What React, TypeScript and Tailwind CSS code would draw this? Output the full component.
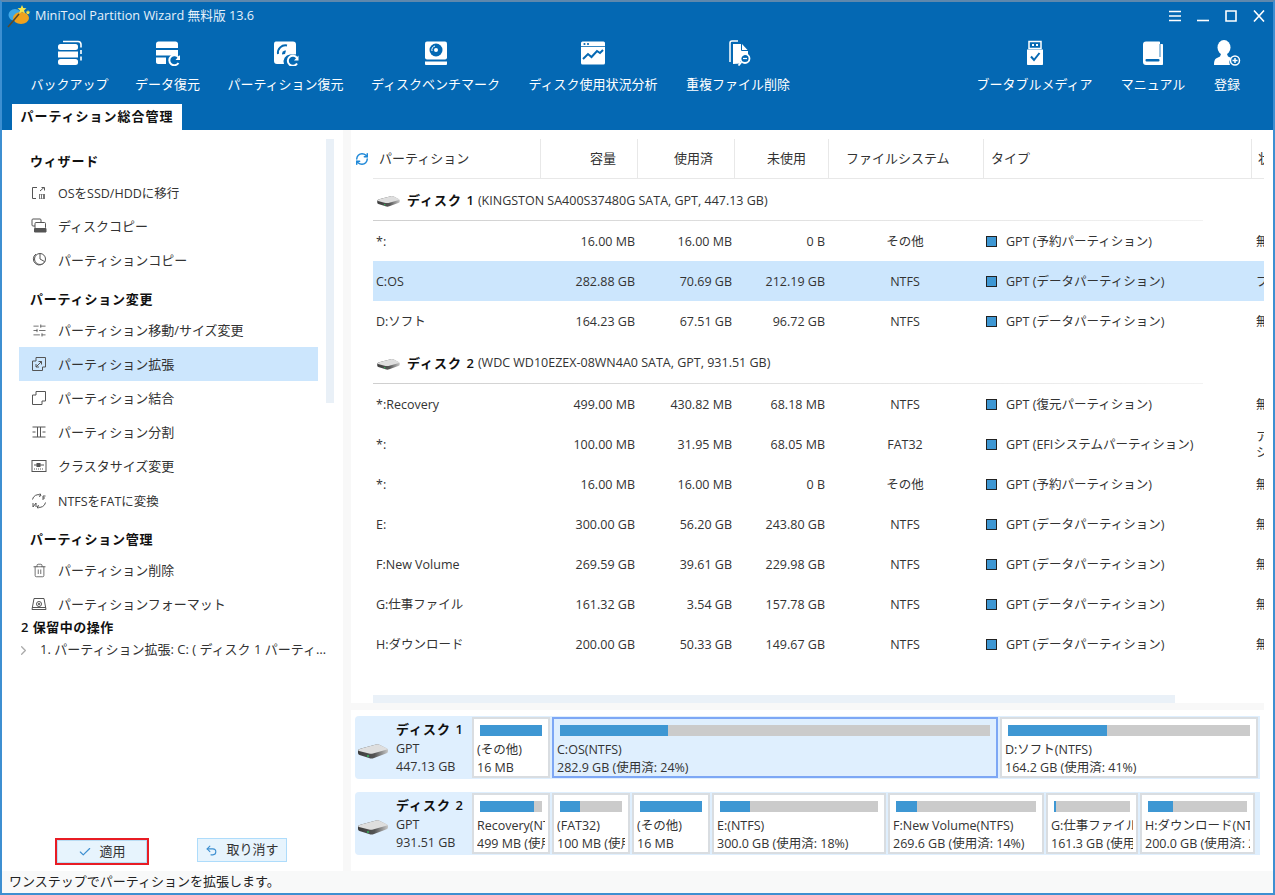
import { ChevronRight, Check, Undo2, RefreshCw, SlidersHorizontal, Trash2 } from 'lucide-react';
import type { ReactNode } from 'react';

const BLUE = '#0468b3';

function Logo() {
  return (
    <svg width="24" height="24" viewBox="0 0 24 24">
      <ellipse cx="8" cy="11" rx="6.500" ry="6" fill="#3fa7e6" />
      <ellipse cx="14" cy="14" rx="8" ry="6" fill="#f0a21e" />
      <path d="M1 23 L12 10" stroke="#5a4a2a" strokeWidth="1.600" />
      <path d="M15 1l1.300 3 3.200.3-2.400 2 .8 3.200-2.900-1.700-2.800 1.700.7-3.200-2.400-2 3.200-.3z" fill="#f7e64a" />
      <path d="M21 6l.7 1.600 1.700.2-1.300 1.100.4 1.700-1.500-.9-1.500.9.4-1.700-1.300-1.100 1.700-.2z" fill="#f7e64a" />
    </svg>
  );
}

function BackupIcon() {
  return (
    <svg width="26" height="26" viewBox="0 0 26 26" fill="#fff">
      <rect x="1" y="4" width="20" height="6" rx="2.500" />
      <rect x="1" y="11.500" width="20" height="6" />
      <rect x="1" y="19" width="20" height="6" rx="2.500" />
      <path d="M6 1.500h15c2 0 3 1 3 3v3" fill="none" stroke="#fff" strokeWidth="1.600" />
      <path d="M24 10v4M24 16.500v4" fill="none" stroke="#fff" strokeWidth="1.600" />
    </svg>
  );
}

function DataRecoveryIcon() {
  return (
    <svg width="26" height="26" viewBox="0 0 26 26" fill="#fff">
      <path d="M1 4c0-1.500 1-2.500 2.500-2.500h17C22 1.500 23 2.500 23 4v4H1z" />
      <rect x="1" y="10" width="22" height="5.500" />
      <path d="M1 17.500h10v6.500H3c-1.200 0-2-.8-2-2z" />
      <path d="M23.500 17.500a5 5 0 1 0 0 5.500" fill="none" stroke="#fff" strokeWidth="2" />
      <path d="M25 15v5h-4.500z" />
    </svg>
  );
}

function PartitionRecoveryIcon() {
  return (
    <svg width="26" height="26" viewBox="0 0 26 26">
      <path d="M4 1.500h16c2 0 3 1 3 3v10h-6a7 7 0 0 0-6 9.500H4c-2 0-3-1-3-3v-17c0-2 1-2.500 3-2.500z" fill="#fff" />
      <path d="M5 14a7.500 7.500 0 0 1 9-8.500" fill="none" stroke={BLUE} strokeWidth="2" />
      <path d="M9 14.500a3.500 3.500 0 0 1 4-4l-1 3.500z" fill={BLUE} />
      <path d="M24 18a5 5 0 1 0 0 5.500" fill="none" stroke="#fff" strokeWidth="2" />
      <path d="M25.500 15.500v5H21z" fill="#fff" />
    </svg>
  );
}

function BenchmarkIcon() {
  return (
    <svg width="24" height="26" viewBox="0 0 24 26">
      <rect x="1" y="1.500" width="22" height="18" rx="2" fill="#fff" />
      <circle cx="12" cy="10" r="6.500" fill={BLUE} />
      <circle cx="12" cy="10" r="2" fill="#fff" />
      <path d="M8 11a4 4 0 0 1 3-5" stroke="#fff" strokeWidth="1" fill="none" />
      <path d="M1 21.500h22v2.500c0 .5-.5 1-1 1H2c-.5 0-1-.5-1-1z" fill="#fff" />
    </svg>
  );
}

function UsageIcon() {
  return (
    <svg width="26" height="26" viewBox="0 0 26 26">
      <rect x="1" y="1.500" width="24" height="23" rx="1.500" fill="#fff" />
      <circle cx="4.500" cy="4" r="1.100" fill={BLUE} />
      <circle cx="8" cy="4" r="1.100" fill={BLUE} />
      <path d="M1 6.500h24" stroke={BLUE} strokeWidth="0.8" />
      <path d="M3 19l5-5 3.500 3 5.500-6 3 2 3-3" fill="none" stroke={BLUE} strokeWidth="2" />
    </svg>
  );
}

function DuplicateIcon() {
  return (
    <svg width="26" height="26" viewBox="0 0 26 26">
      <path d="M5 22V3c0-1 1-2 2-2h6" fill="none" stroke="#fff" strokeWidth="1.500" />
      <path d="M8 4h9l6 6.500V15a6 6 0 0 0-7 8.500l-8 .5z" fill="#fff" />
      <path d="M16.500 4v6.500H23" fill="none" stroke={BLUE} strokeWidth="1" />
      <circle cx="20" cy="18.500" r="4.500" fill="none" stroke="#fff" strokeWidth="1.800" />
      <path d="M18 18.500h4" stroke="#fff" strokeWidth="1.200" />
      <path d="M16.500 22l-3 3.500" stroke="#fff" strokeWidth="1.800" />
    </svg>
  );
}

function UsbIcon() {
  return (
    <svg width="20" height="26" viewBox="0 0 20 26">
      <path d="M4 1.500h12v7H4z" fill="none" stroke="#fff" strokeWidth="1.500" />
      <rect x="7" y="4" width="2" height="2" fill="#fff" />
      <rect x="11" y="4" width="2" height="2" fill="#fff" />
      <path d="M2 9.500h16V24c0 .6-.4 1-1 1H3c-.6 0-1-.4-1-1z" fill="#fff" />
      <path d="M6 16.500l3 3.500 5.500-7" fill="none" stroke={BLUE} strokeWidth="2" />
    </svg>
  );
}

function BookIcon() {
  return (
    <svg width="24" height="26" viewBox="0 0 24 26">
      <path d="M5 1.500h13c.6 0 1 .4 1 1v1.500h2c.6 0 1 .4 1 1V24c0 .6-.4 1-1 1H5c-2 0-3-1-3-3V4.500c0-2 1-3 3-3z" fill="#fff" />
      <path d="M19 4v13" stroke={BLUE} strokeWidth="0.8" />
      <rect x="4.500" y="19" width="14" height="2.500" rx="1" fill={BLUE} />
    </svg>
  );
}

function UserIcon() {
  return (
    <svg width="28" height="26" viewBox="0 0 28 26">
      <ellipse cx="11" cy="7.500" rx="6.500" ry="7.500" fill="#fff" />
      <path d="M8 14h6l1 2.500 3.500 1.500a6 6 0 0 0-1.500 7H1c0-3 .5-5.500 2-6.500l4-2z" fill="#fff" />
      <circle cx="22" cy="20.500" r="4.500" fill="none" stroke="#fff" strokeWidth="1.500" />
      <path d="M22 18v5M19.500 20.500h5" stroke="#fff" strokeWidth="1.500" />
    </svg>
  );
}

function DiskGlyph({ w = 32, h = 16 }: { w?: number; h?: number }) {
  return (
    <svg width={w} height={h} viewBox="0 0 32 16">
      <defs>
        <linearGradient id="hddSide" x1="0" x2="1" y1="0" y2="0">
          <stop offset="0" stopColor="#3c3c3c" />
          <stop offset="0.55" stopColor="#555" />
          <stop offset="1" stopColor="#c8c8c8" />
        </linearGradient>
      </defs>
      <path d="M1 7Q2 6 6 5L19 1.500Q21 1 23 2L30 5.500Q31.500 6.500 31 8.500Q31 10 29 10.500L17 15Q14.500 16 12 15L2.500 12Q1 11.500 1 10z" fill="url(#hddSide)" />
      <path d="M1 7Q2 6 6 5L19 1.500Q21 1 23 2L30 5.500Q31 6 30 6.500L16 10.500Q14 11 12 10.500L2 8Q1 7.500 1 7z" fill="#dedede" />
      <circle cx="11" cy="13" r="0.900" fill="#2fc45a" />
    </svg>
  );
}

function LineIcon({ children }: { children: ReactNode }) {
  return (
    <svg width="16" height="16" viewBox="0 0 16 16" fill="none" stroke="#555" strokeWidth="1">
      {children}
    </svg>
  );
}

const sideIcons: Record<string, ReactNode> = {
  migrate: (
    <LineIcon>
      <path d="M6 2.500H1.500v11H5" />
      <path d="M9 6l4-3.500M10.500 2.500h3v3" />
      <rect x="8" y="9" width="6" height="5" fill="#777" stroke="none" />
      <path d="M9.500 9.500v4M11.500 9.500v4" stroke="#fff" />
    </LineIcon>
  ),
  disk: (
    <LineIcon>
      <rect x="1" y="1" width="9" height="7" rx="1" />
      <rect x="4" y="4.500" width="10.500" height="6" rx="1" fill="#fff" />
      <path d="M3.500 10.500h11.500v3.500H3.500z" fill="#555" stroke="#555" />
    </LineIcon>
  ),
  part: (
    <LineIcon>
      <path d="M5 2a6 6 0 1 0 9 7" />
      <circle cx="9" cy="7" r="5.500" fill="#fff" />
      <path d="M9 1.500V7l4.500 2.500" />
    </LineIcon>
  ),
  move: <SlidersHorizontal size={15} strokeWidth={1.200} color="#444" />,
  extend: (
    <LineIcon>
      <path d="M5 1.500h9.500V11h-3v3.500H1.500V5H5z" />
      <path d="M5 11l5.500-5.500M7.500 5.500h3v3M5 8v3h3" />
    </LineIcon>
  ),
  merge: (
    <LineIcon>
      <path d="M5 1.500h9.500V11H11v3.500H1.500V5H5z" />
    </LineIcon>
  ),
  split: (
    <LineIcon>
      <path d="M1.500 3h13M1.500 13h13M6.500 3v10M9.500 3v10M1.500 8h3M11.500 8h3" />
    </LineIcon>
  ),
  cluster: (
    <LineIcon>
      <rect x="1" y="2.500" width="14" height="11" />
      <path d="M3 7h10" />
      <rect x="6" y="5.500" width="3" height="3" fill="#555" />
      <path d="M3 11h10" strokeDasharray="1 1" />
    </LineIcon>
  ),
  convert: (
    <LineIcon>
      <path d="M1.500 6.500a6 6 0 0 1 8-4.500M14.500 9.500a6 6 0 0 1-8 4.500" />
      <path d="M9 0.500l1 2-2 1M7 15.500l-1-2 2-1" />
      <path d="M12 3h2.500M12 3v4M12 5h2M2 10v4l3-4v4" />
    </LineIcon>
  ),
  del: <Trash2 size={15} strokeWidth={1.200} color="#444" />,
  format: (
    <LineIcon>
      <path d="M3 2.500h10l2 11H1z" />
      <circle cx="8" cy="8" r="2.500" />
      <circle cx="8" cy="8" r="0.700" fill="#555" />
      <path d="M1 11.500h14" />
    </LineIcon>
  ),
};

type Side = { icon: string; label: string };
const sideGroups: { title: string; items: Side[] }[] = [
  {
    title: 'ウィザード',
    items: [
      { icon: 'migrate', label: 'OSをSSD/HDDに移行' },
      { icon: 'disk', label: 'ディスクコピー' },
      { icon: 'part', label: 'パーティションコピー' },
    ],
  },
  {
    title: 'パーティション変更',
    items: [
      { icon: 'move', label: 'パーティション移動/サイズ変更' },
      { icon: 'extend', label: 'パーティション拡張' },
      { icon: 'merge', label: 'パーティション結合' },
      { icon: 'split', label: 'パーティション分割' },
      { icon: 'cluster', label: 'クラスタサイズ変更' },
      { icon: 'convert', label: 'NTFSをFATに変換' },
    ],
  },
  {
    title: 'パーティション管理',
    items: [
      { icon: 'del', label: 'パーティション削除' },
      { icon: 'format', label: 'パーティションフォーマット' },
    ],
  },
];

type Row = { name: string; cap: string; used: string; free: string; fs: string; type: string; status: string; selected?: boolean };
const disk1Rows: Row[] = [
  { name: '*:', cap: '16.00 MB', used: '16.00 MB', free: '0 B', fs: 'その他', type: 'GPT (予約パーティション)', status: '無し' },
  { name: 'C:OS', cap: '282.88 GB', used: '70.69 GB', free: '212.19 GB', fs: 'NTFS', type: 'GPT (データパーティション)', status: 'ブート', selected: true },
  { name: 'D:ソフト', cap: '164.23 GB', used: '67.51 GB', free: '96.72 GB', fs: 'NTFS', type: 'GPT (データパーティション)', status: '無し' },
];
const disk2Rows: Row[] = [
  { name: '*:Recovery', cap: '499.00 MB', used: '430.82 MB', free: '68.18 MB', fs: 'NTFS', type: 'GPT (復元パーティション)', status: '無し' },
  { name: '*:', cap: '100.00 MB', used: '31.95 MB', free: '68.05 MB', fs: 'FAT32', type: 'GPT (EFIシステムパーティション)', status: 'アクティブ &\nシステム' },
  { name: '*:', cap: '16.00 MB', used: '16.00 MB', free: '0 B', fs: 'その他', type: 'GPT (予約パーティション)', status: '無し' },
  { name: 'E:', cap: '300.00 GB', used: '56.20 GB', free: '243.80 GB', fs: 'NTFS', type: 'GPT (データパーティション)', status: '無し' },
  { name: 'F:New Volume', cap: '269.59 GB', used: '39.61 GB', free: '229.98 GB', fs: 'NTFS', type: 'GPT (データパーティション)', status: '無し' },
  { name: 'G:仕事ファイル', cap: '161.32 GB', used: '3.54 GB', free: '157.78 GB', fs: 'NTFS', type: 'GPT (データパーティション)', status: '無し' },
  { name: 'H:ダウンロード', cap: '200.00 GB', used: '50.33 GB', free: '149.67 GB', fs: 'NTFS', type: 'GPT (データパーティション)', status: '無し' },
];

function TableRow({ r }: { r: Row }) {
  return (
    <div className={`grid grid-cols-[167px_97px_97px_93px_156px_268px_1fr] h-10 pt-[2px] items-center text-[#333] ${r.selected ? 'bg-[#cce6fd]' : ''}`}>
      <div className="pl-[3px]">{r.name}</div>
      <div className="text-right pr-[2px]">{r.cap}</div>
      <div className="text-right pr-[2px]">{r.used}</div>
      <div className="text-right pr-[2px]">{r.free}</div>
      <div className="text-center">{r.fs}</div>
      <div className="flex items-center">
        <span className="w-[11px] h-[11px] ml-[3px] mr-[9px] mb-[2px] bg-[#3e97d3] border border-[#222]" />
        {r.type}
      </div>
      <div className="pl-[5px] leading-[16px] whitespace-pre">{r.status}</div>
    </div>
  );
}

function DiskHeader({ label, info, h }: { label: string; info: string; h: string }) {
  return (
    <div className={`${h} flex flex-col`}>
      <div className="flex-1 flex items-center pt-[3px] pl-[3px] text-[#333]">
        <DiskGlyph w={25} h={12} />
        <span className="ml-[6px] mr-[3px] font-semibold text-[#111] text-[13px] tracking-[1px]">{label}</span>
        {info}
      </div>
      <div className="h-px w-[830px] bg-linear-to-r from-[#cfcfcf] to-[#f2f2f2]" />
    </div>
  );
}

type Cell = { w: string; pct: number; l1: string; l2: string; selected?: boolean };
const map1: Cell[] = [
  { w: 'w-[78px]', pct: 100, l1: '(その他)', l2: '16 MB' },
  { w: 'w-[446px]', pct: 25, l1: 'C:OS(NTFS)', l2: '282.9 GB (使用済: 24%)', selected: true },
  { w: 'w-[258px]', pct: 41, l1: 'D:ソフト(NTFS)', l2: '164.2 GB (使用済: 41%)' },
];
const map2: Cell[] = [
  { w: 'w-[78px]', pct: 87, l1: 'Recovery(NTFS)', l2: '499 MB (使用済: 86%)' },
  { w: 'w-[78px]', pct: 32, l1: '(FAT32)', l2: '100 MB (使用済: 32%)' },
  { w: 'w-[78px]', pct: 100, l1: '(その他)', l2: '16 MB' },
  { w: 'w-[174px]', pct: 19, l1: 'E:(NTFS)', l2: '300.0 GB (使用済: 18%)' },
  { w: 'w-[156px]', pct: 15, l1: 'F:New Volume(NTFS)', l2: '269.6 GB (使用済: 14%)' },
  { w: 'w-[92px]', pct: 3, l1: 'G:仕事ファイル(NTFS)', l2: '161.3 GB (使用済: 2%)' },
  { w: 'w-[115px]', pct: 25, l1: 'H:ダウンロード(NTFS)', l2: '200.0 GB (使用済: 25%)' },
];

function DiskCard({ name, size, cells }: { name: string; size: string; cells: Cell[] }) {
  return (
    <div className="w-[905px] h-[63px] ml-1 bg-[#dfeffe] rounded-l-[4px] flex py-px">
      <div className="w-[117px] flex shrink-0">
        <div className="w-[41px] pl-[2px] pt-[26px]">
          <DiskGlyph />
        </div>
        <div className="leading-[18px] text-[#333] pt-[3px]">
          <div className="font-semibold text-[#111] text-[13px] tracking-[1px] mb-[2px]">{name}</div>
          <div>GPT</div>
          <div>{size}</div>
        </div>
      </div>
      <div className="flex gap-[2px]">
        {cells.map((c) => (
          <div key={c.l1} className={`${c.w} border-2 px-[3px] ${c.selected ? 'border-[#7da7f5] bg-[#dfeffe]' : 'border-[#d9dde1] bg-white'}`}>
            <div className="overflow-hidden h-full whitespace-nowrap text-[#333] leading-[18px]">
              <div className="mx-[3px] mt-[6px] mb-[5px] h-[11px] bg-[#cbcbcb]">
                <div className="h-full bg-[#3e97d3]" style={{ width: `${c.pct}%` }} />
              </div>
              <div>{c.l1}</div>
              <div>{c.l2}</div>
            </div>
          </div>
        ))}
      </div>
    </div>
  );
}

function ToolItem({ w, icon, label }: { w: string; icon: ReactNode; label: string }) {
  return (
    <div className={`${w} flex flex-col items-center`}>
      <div className="h-[26px] flex items-center">{icon}</div>
      <div className="mt-[9px] h-[18px] leading-[18px] text-[13px] text-white whitespace-nowrap">{label}</div>
    </div>
  );
}

export default function App() {
  return (
    <div className="w-[1275px] h-[895px] flex flex-col overflow-hidden border-x-2 border-b-2 border-[#3d8fd1] border-t-2 border-t-[#5f88ad] bg-white text-[12.5px] font-['Open_Sans','Noto_Sans_CJK_JP',sans-serif]">
      <header className="h-[128px] shrink-0 bg-[#0468b3] flex flex-col">
        <div className="h-[28px] flex items-center pl-[5px] pr-[8px]">
          <Logo />
          <span className="ml-1 text-[12.7px] text-[#e6f1fa]">MiniTool Partition Wizard 無料版 13.6</span>
          <div className="ml-auto flex items-center gap-[16px] text-white">
            <svg width="12" height="12" viewBox="0 0 12 12" stroke="#fff" strokeWidth="1.600"><path d="M0 1.500h12M0 6h12M0 10.500h12" /></svg>
            <svg width="12" height="12" viewBox="0 0 12 12" stroke="#fff" strokeWidth="1.600"><path d="M0 10.500h12" /></svg>
            <svg width="12" height="12" viewBox="0 0 12 12" stroke="#fff" strokeWidth="1.600" fill="none"><path d="M1 1h10v10H1z" /></svg>
            <svg width="12" height="12" viewBox="0 0 12 12" stroke="#fff" strokeWidth="1.600"><path d="M1 .5l10 11M11 .5l-10 11" /></svg>
          </div>
        </div>
        <div className="mt-[10px] flex justify-between pl-[30px] pr-[33px]">
          <div className="flex gap-[28px]">
            <ToolItem w="w-[75px]" icon={<BackupIcon />} label="バックアップ" />
            <ToolItem w="w-[65px]" icon={<DataRecoveryIcon />} label="データ復元" />
            <ToolItem w="w-[115px]" icon={<PartitionRecoveryIcon />} label="パーティション復元" />
            <ToolItem w="w-[129px]" icon={<BenchmarkIcon />} label="ディスクベンチマーク" />
            <ToolItem w="w-[130px]" icon={<UsageIcon />} label="ディスク使用状況分析" />
            <ToolItem w="w-[104px]" icon={<DuplicateIcon />} label="重複ファイル削除" />
          </div>
          <div className="flex gap-[29px]">
            <ToolItem w="w-[115px]" icon={<UsbIcon />} label="ブータブルメディア" />
            <ToolItem w="w-[64px]" icon={<BookIcon />} label="マニュアル" />
            <ToolItem w="w-[26px]" icon={<UserIcon />} label="登録" />
          </div>
        </div>
        <div className="mt-[11px] ml-[10px] w-[170px] h-[26px] bg-white flex items-center justify-center text-[13px] font-semibold text-[#111] tracking-[1px]">
          パーティション総合管理
        </div>
      </header>

      <main className="flex-1 flex min-h-0">
        <aside className="relative w-[341px] shrink-0 flex flex-col">
          <div className="absolute left-[324px] top-[9px] w-2 h-[264px] bg-[#e9f0f7]" />
          <div className="h-[484px] overflow-hidden pt-[15px] pl-[17px]">
            {sideGroups.map((g, gi) => (
              <div key={g.title}>
                <div className={`${gi === 0 ? 'h-[30px] pt-[4px]' : 'h-9 pt-[10px]'} pl-[11px] flex items-center font-semibold text-[13px] text-[#111] tracking-[0.8px]`}>
                  {g.title}
                </div>
                {g.items.map((it) => (
                  <div key={it.label} className={`w-[299px] h-[34px] flex items-center pl-[12px] text-[#333] ${/[A-Z]/.test(it.label) ? 'text-[12.5px] pt-[2px]' : 'text-[13px]'} ${it.icon === 'extend' ? 'bg-[#cce6fd]' : ''}`}>
                    <span className="w-4 h-4 flex items-center justify-center">{sideIcons[it.icon]}</span>
                    <span className="ml-[11px] pt-[2px] whitespace-nowrap">{it.label}</span>
                  </div>
                ))}
              </div>
            ))}
          </div>
          <div className="mt-[2px] pl-[19px] h-6 flex items-center font-semibold text-[13px] text-[#111] tracking-[0.5px]">2 保留中の操作</div>
          <div className="flex items-center h-[20px] pl-[14px] text-[#333]">
            <ChevronRight size={15} color="#aaa" strokeWidth={2} />
            <span className="ml-[9px] w-[290px] truncate text-[13px]">1. パーティション拡張: C: ( ディスク 1 パーティション 2 )</span>
          </div>
          <div className="mt-auto pb-[6px] pl-[53px] flex items-start gap-[48px]">
            <button className="w-[94px] h-[27px] border-2 border-[#e81c24] p-0">
              <span className="h-full flex items-center justify-center gap-[7px] bg-[#e7f4fd] border border-[#b9dcf3] text-[#333] text-[13px]">
                <Check size={14} color="#3d8fd1" strokeWidth={2} />
                適用
              </span>
            </button>
            <button className="w-[90px] h-[24px] border border-[#aedcfb] bg-[#e7f4fd] flex items-center justify-center gap-[8px] text-[#333] text-[13px]">
              <Undo2 size={13} color="#3d8fd1" strokeWidth={2} />
              取り消す
            </button>
          </div>
        </aside>

        <div className="w-2 shrink-0 bg-[#f8f8f8]" />

        <section className="w-[913px] shrink-0 flex flex-col">
          <div className="h-[565px] flex pt-[9px]">
            <div className="w-[22px] shrink-0 pt-[13px] pl-[4px]">
              <RefreshCw size={14} color="#1e88d8" strokeWidth={2.500} />
            </div>
            <div className="w-[891px] overflow-hidden whitespace-nowrap">
              <div className="grid grid-cols-[168px_97px_97px_94px_155px_268px_1fr] h-10 border-b border-[#e8e8e8] text-[#333]">
                <div className="pl-[6px] flex items-center text-[13px] border-r border-[#e8e8e8]">パーティション</div>
                <div className="pr-[21px] flex items-center justify-end text-[13px] border-r border-[#e8e8e8]">容量</div>
                <div className="pr-[21px] flex items-center justify-end text-[13px] border-r border-[#e8e8e8]">使用済</div>
                <div className="pr-[22px] flex items-center justify-end text-[13px] border-r border-[#e8e8e8]">未使用</div>
                <div className="pl-[17px] flex items-center text-[13px] border-r border-[#e8e8e8]">ファイルシステム</div>
                <div className="pl-[7px] flex items-center text-[13px] border-r border-[#e8e8e8]">タイプ</div>
                <div className="pl-[6px] flex items-center text-[13px]">状態</div>
              </div>
              <DiskHeader label="ディスク 1" info="(KINGSTON SA400S37480G SATA, GPT, 447.13 GB)" h="h-[42px]" />
              {disk1Rows.map((r, i) => <TableRow key={i} r={r} />)}
              <DiskHeader label="ディスク 2" info="(WDC WD10EZEX-08WN4A0 SATA, GPT, 931.51 GB)" h="h-[43px]" />
              {disk2Rows.map((r, i) => <TableRow key={i} r={r} />)}
            </div>
          </div>
          <div className="h-2 ml-[22px] w-[802px] bg-[#eaf1f8]" />
          <div className="h-[7px] bg-[#f8f8f8]" />
          <div className="pt-[6px] flex flex-col gap-[13px]">
            <DiskCard name="ディスク 1" size="447.13 GB" cells={map1} />
            <DiskCard name="ディスク 2" size="931.51 GB" cells={map2} />
          </div>
        </section>
      </main>

      <footer className="h-[22px] shrink-0 bg-[#f8f9f9] flex items-center pl-[7px] text-[13px] text-[#222]">
        ワンステップでパーティションを拡張します。
      </footer>
    </div>
  );
}
